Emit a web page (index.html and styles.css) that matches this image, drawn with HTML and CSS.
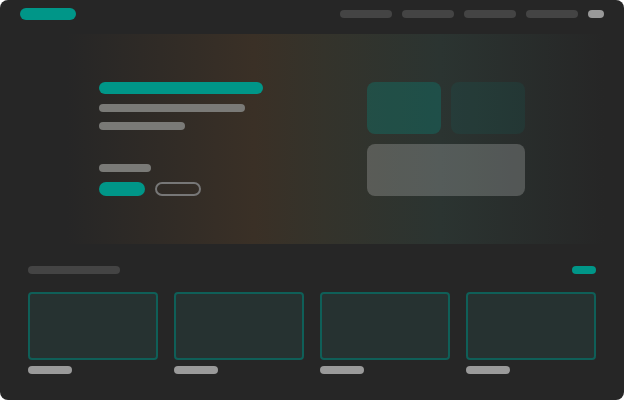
FILE: index.html
```html
<!DOCTYPE html>
<html lang="en">
<head>
<meta charset="utf-8">
<title>Landing</title>
<link rel="stylesheet" href="styles.css">
</head>
<body>
<div class="app">
  <header class="nav">
    <div class="logo"></div>
    <nav class="links">
      <span class="link"></span>
      <span class="link"></span>
      <span class="link"></span>
      <span class="link"></span>
      <span class="avatar"></span>
    </nav>
  </header>

  <section class="hero">
    <div class="hero-text">
      <div class="title"></div>
      <div class="line line-wide"></div>
      <div class="line line-mid"></div>
      <div class="line line-short"></div>
      <div class="actions">
        <span class="btn btn-solid"></span>
        <span class="btn btn-outline"></span>
      </div>
    </div>
    <div class="hero-tiles">
      <div class="tile tile-strong"></div>
      <div class="tile tile-soft"></div>
      <div class="tile tile-wide"></div>
    </div>
  </section>

  <section class="gallery">
    <div class="gallery-head">
      <span class="heading"></span>
      <span class="more"></span>
    </div>
    <div class="cards">
      <div class="card"><div class="thumb"></div><span class="caption"></span></div>
      <div class="card"><div class="thumb"></div><span class="caption"></span></div>
      <div class="card"><div class="thumb"></div><span class="caption"></span></div>
      <div class="card"><div class="thumb"></div><span class="caption"></span></div>
    </div>
  </section>
</div>
</body>
</html>
```

FILE: styles.css
```css
* { box-sizing: border-box; }

html, body {
  margin: 0;
  background: #ffffff;
}

.app {
  width: 624px;
  height: 400px;
  background: #262626;
  border-radius: 8px;
  overflow: hidden;
  font-family: "Liberation Sans", Arial, sans-serif;
}

/* top bar */
.nav {
  display: flex;
  justify-content: space-between;
  align-items: center;
  height: 34px;
  padding: 0 20px 6px 20px;
}

.logo {
  width: 56px;
  height: 12px;
  border-radius: 6px;
  background: #009688;
}

.links {
  display: flex;
  align-items: center;
  gap: 10px;
}

.link {
  width: 52px;
  height: 8px;
  border-radius: 4px;
  background: #444444;
}

.avatar {
  width: 16px;
  height: 8px;
  border-radius: 4px;
  background: #999999;
}

/* hero */
.hero {
  margin: 0 20px;
  height: 210px;
  padding: 48px 79px;
  display: flex;
  justify-content: space-between;
  background: linear-gradient(90deg, #262626 8%, #3a3026 40%, #34332b 52%, #2b3431 72%, #262626 100%);
}

.hero-text {
  display: flex;
  flex-direction: column;
}

.title {
  width: 164px;
  height: 12px;
  border-radius: 6px;
  background: #009688;
}

.line {
  height: 8px;
  border-radius: 4px;
  background: #7a7a77;
  margin-top: 10px;
}

.line-wide { width: 146px; }
.line-mid { width: 86px; }
.line-short { width: 52px; margin-top: 34px; }

.actions {
  display: flex;
  gap: 10px;
  margin-top: 10px;
}

.btn {
  width: 46px;
  height: 14px;
  border-radius: 7px;
}

.btn-solid { background: #009688; }
.btn-outline { border: 2px solid #777777; }

.hero-tiles {
  display: grid;
  grid-template-columns: 74px 74px;
  grid-template-rows: 52px 52px;
  gap: 10px;
}

.tile { border-radius: 8px; }
.tile-strong { background: rgba(0, 150, 136, 0.28); }
.tile-soft { background: rgba(0, 150, 136, 0.1); }
.tile-wide {
  grid-column: 1 / 3;
  background: rgba(255, 255, 255, 0.2);
}

/* gallery */
.gallery {
  padding: 22px 28px 0 28px;
}

.gallery-head {
  display: flex;
  justify-content: space-between;
  align-items: center;
}

.heading {
  width: 92px;
  height: 8px;
  border-radius: 4px;
  background: #444444;
}

.more {
  width: 24px;
  height: 8px;
  border-radius: 4px;
  background: #009688;
}

.cards {
  display: flex;
  gap: 16px;
  margin-top: 18px;
}

.card {
  width: 130px;
  display: flex;
  flex-direction: column;
  gap: 6px;
}

.thumb {
  height: 68px;
  border: 2px solid #0f5f58;
  border-radius: 4px;
  background: #263231;
}

.caption {
  width: 44px;
  height: 8px;
  border-radius: 4px;
  background: #9a9a9a;
}
```
